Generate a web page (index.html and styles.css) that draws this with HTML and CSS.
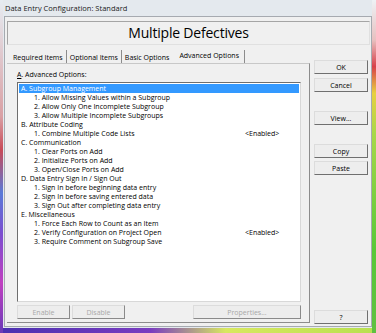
FILE: index.html
```html
<!DOCTYPE html>
<html lang="en">
<head>
    <meta charset="UTF-8">
    <title>Data Entry Configuration: Standard</title>
    <link rel="stylesheet" href="styles.css">
</head>
<body>
    <div class="window">
        <div class="titlebar">Data Entry Configuration: Standard</div>

        <div class="client">
            <div class="header">Multiple Defectives</div>

            <div class="main">
                <div class="left">
                    <div class="tabs">
                        <div class="tab">Required Items</div>
                        <div class="tab">Optional Items</div>
                        <div class="tab">Basic Options</div>
                        <div class="tab active">Advanced Options</div>
                    </div>

                    <div class="panel">
                        <div class="list-label"><u>A</u>. Advanced Options:</div>

                        <div class="list">
                            <div class="row group selected">A. Subgroup Management</div>
                            <div class="row item">1. Allow Missing Values within a Subgroup</div>
                            <div class="row item">2. Allow Only One Incomplete Subgroup</div>
                            <div class="row item">3. Allow Multiple Incomplete Subgroups</div>
                            <div class="row group">B. Attribute Coding</div>
                            <div class="row item">1. Combine Multiple Code Lists<span class="state">&lt;Enabled&gt;</span></div>
                            <div class="row group">C. Communication</div>
                            <div class="row item">1. Clear Ports on Add</div>
                            <div class="row item">2. Initialize Ports on Add</div>
                            <div class="row item">3. Open/Close Ports on Add</div>
                            <div class="row group">D. Data Entry Sign In / Sign Out</div>
                            <div class="row item">1. Sign In before beginning data entry</div>
                            <div class="row item">2. Sign In before saving entered data</div>
                            <div class="row item">3. Sign Out after completing data entry</div>
                            <div class="row group">E. Miscellaneous</div>
                            <div class="row item">1. Force Each Row to Count as an Item</div>
                            <div class="row item">2. Verify Configuration on Project Open<span class="state">&lt;Enabled&gt;</span></div>
                            <div class="row item">3. Require Comment on Subgroup Save</div>
                        </div>

                        <div class="list-buttons">
                            <button class="btn small" disabled>Enable</button>
                            <button class="btn small" disabled>Disable</button>
                            <button class="btn wide" disabled>Properties...</button>
                        </div>
                    </div>
                </div>

                <div class="side">
                    <button class="btn">OK</button>
                    <button class="btn gap-4">Cancel</button>
                    <button class="btn gap-19">View...</button>
                    <button class="btn gap-19">Copy</button>
                    <button class="btn gap-3">Paste</button>
                    <button class="btn help">?</button>
                </div>
            </div>
        </div>
    </div>
</body>
</html>
```

FILE: styles.css
```css
html, body {
    margin: 0;
    padding: 0;
}
body {
    width: 376px;
    height: 333px;
    overflow: hidden;
    font-family: "Open Sans", "Noto Sans", sans-serif;
    color: #000;
}
.window {
    box-sizing: border-box;
    width: 376px;
    height: 333px;
    padding: 0 4px 6px 4px;
    display: flex;
    flex-direction: column;
    background:
        linear-gradient(to bottom, #e6ecf2 0%, #d9a0a4 35%, #c84b58 45%, #5a7ad8 58%, #7b4fd0 70%, #c040c0 85%, #6a3ab8 100%) left top / 3px 100% no-repeat,
        linear-gradient(to bottom, #eef2f5 0%, #e8c0c0 12%, #d8404a 20%, #e8d040 28%, #a8d848 40%, #58c838 75%, #60c040 100%) right top / 4px 100% no-repeat,
        linear-gradient(to right, #4a30b0 0%, #7a3cc0 40%, #d8e860 60%, #b8e050 100%) left bottom / 100% 5px no-repeat,
        #e4e9ee;
}
.titlebar {
    height: 16px;
    line-height: 16px;
    font-size: 7.5px;
    padding-left: 1px;
    color: #1a1a1a;
}
.client {
    flex: 1;
    background: #f0f0f0;
    border: 1px solid #a6aab0;
    padding: 4px 1px 0 2px;
    display: flex;
    flex-direction: column;
}
.header {
    height: 22px;
    line-height: 22px;
    border: 1px solid #a5a5a5;
    border-right-color: #e0e0e0;
    border-bottom-color: #e0e0e0;
    text-align: center;
    font-size: 14px;
    letter-spacing: -0.2px;
}
.main {
    flex: 1;
    display: flex;
    margin-top: 5px;
}
.left {
    width: 303px;
    display: flex;
    flex-direction: column;
}
.tabs {
    display: flex;
    height: 13px;
    padding-left: 3px;
    font-size: 7px;
}
.tab {
    line-height: 13px;
    padding: 1px 3px 0 3px;
    border-right: 1px solid #8c8c8c;
    box-sizing: border-box;
}
.tab:nth-child(3) {
    border-right: none;
    padding-right: 5px;
}
.tab.active {
    line-height: 11px;
    padding: 0 5px 0 5px;
    border-right-color: #8c8c8c;
}
.panel {
    flex: 1;
    border-top: 1px solid #c8c8c8;
    border-right: 1px solid #8c8c8c;
    border-bottom: 1px solid #8c8c8c;
    padding: 3px 0 0 10px;
    display: flex;
    flex-direction: column;
    margin-bottom: 3px;
}
.list-label {
    font-size: 7px;
    height: 15px;
    line-height: 15px;
}
.list {
    height: 217px;
    width: 280px;
    background: #fff;
    border: 1px solid #6e6e6e;
    border-right-color: #d8d8d8;
    border-bottom-color: #d8d8d8;
    padding: 1px 1px 0 1px;
    font-size: 7px;
}
.row {
    height: 9px;
    line-height: 9px;
    position: relative;
    white-space: nowrap;
}
.row.group {
    padding-left: 2px;
}
.row.item {
    padding-left: 15px;
}
.row.selected {
    background: #3399ff;
    color: #fff;
}
.state {
    position: absolute;
    left: 226px;
}
.list-buttons {
    display: flex;
    margin-top: 3px;
}
.btn {
    font-family: "Open Sans", "Noto Sans", sans-serif;
    font-size: 7px;
    height: 14px;
    padding: 0;
    background: #ededed;
    border: 1px solid #dcdcdc;
    border-right-color: #6f6f6f;
    border-bottom-color: #6f6f6f;
    color: #000;
}
.btn:disabled {
    color: #a8a8a8;
    border-right-color: #8a8a8a;
    border-bottom-color: #8a8a8a;
}
.btn.small {
    width: 53px;
    margin-right: 2px;
}
.btn.wide {
    width: 108px;
    margin-left: 66px;
}
.side {
    display: flex;
    flex-direction: column;
    padding: 10px 0 0 4px;
    width: 54px;
}
.side .btn {
    width: 54px;
}
.gap-3 {
    margin-top: 3px;
}
.gap-4 {
    margin-top: 4px;
}
.gap-19 {
    margin-top: 19px;
}
.help {
    margin-top: auto;
    margin-bottom: 2px;
}
```
